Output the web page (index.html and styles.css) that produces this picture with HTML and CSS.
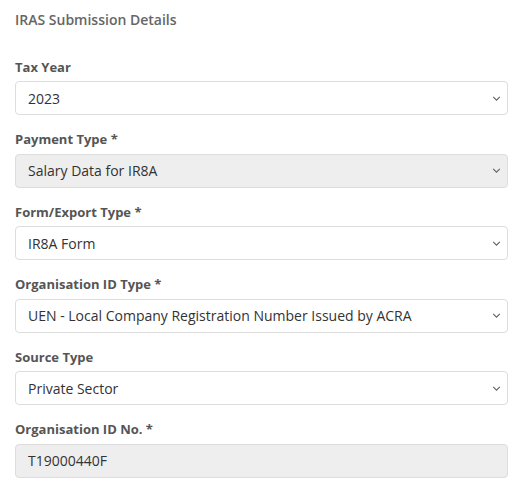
FILE: index.html
```html
<!DOCTYPE html>
<html>
<head>
<meta charset="utf-8">
<link rel="stylesheet" href="styles.css">
</head>
<body>
<div class="panel">
  <h4 class="title">IRAS Submission Details</h4>
  <div class="group">
    <label class="lbl">Tax Year</label>
    <div class="ctrl"><span class="val">2023</span><svg class="chev" viewBox="0 0 10 6" width="9" height="5"><polyline points="1,1 5,5 9,1"/></svg></div>
  </div>
  <div class="group">
    <label class="lbl">Payment Type *</label>
    <div class="ctrl disabled"><span class="val">Salary Data for IR8A</span><svg class="chev" viewBox="0 0 10 6" width="9" height="5"><polyline points="1,1 5,5 9,1"/></svg></div>
  </div>
  <div class="group">
    <label class="lbl">Form/Export Type *</label>
    <div class="ctrl"><span class="val">IR8A Form</span><svg class="chev" viewBox="0 0 10 6" width="9" height="5"><polyline points="1,1 5,5 9,1"/></svg></div>
  </div>
  <div class="group">
    <label class="lbl">Organisation ID Type *</label>
    <div class="ctrl"><span class="val">UEN - Local Company Registration Number Issued by ACRA</span><svg class="chev" viewBox="0 0 10 6" width="9" height="5"><polyline points="1,1 5,5 9,1"/></svg></div>
  </div>
  <div class="group">
    <label class="lbl">Source Type</label>
    <div class="ctrl"><span class="val">Private Sector</span><svg class="chev" viewBox="0 0 10 6" width="9" height="5"><polyline points="1,1 5,5 9,1"/></svg></div>
  </div>
  <div class="group">
    <label class="lbl">Organisation ID No. *</label>
    <div class="ctrl disabled"><span class="val">T19000440F</span></div>
  </div>
</div>
</body>
</html>
```

FILE: styles.css
```css
html, body {
  margin: 0;
  padding: 0;
  background: #fff;
}
body {
  font-family: "Open Sans", "Noto Sans", sans-serif;
  color: #333;
}
.panel {
  width: 493px;
  padding: 0 0 0 15px;
}
.title {
  margin: 0;
  padding-top: 10px;
  height: 47.5px;
  font-size: 14px;
  line-height: 20px;
  font-weight: 600;
  color: #666;
}
.group {
  margin-bottom: 15px;
}
.lbl {
  display: block;
  font-size: 13px;
  line-height: 18.57px;
  font-weight: 700;
  color: #555;
  margin-bottom: 5px;
}
.ctrl {
  box-sizing: border-box;
  height: 34px;
  border: 1px solid #ddd;
  border-radius: 4px;
  background: #fff;
  display: flex;
  align-items: center;
  justify-content: space-between;
  padding: 0 6px 0 12px;
  font-size: 14px;
  color: #333;
}
.ctrl.disabled {
  background: #eee;
}
.val {
  white-space: nowrap;
}
.chev {
  fill: none;
  stroke: #666;
  stroke-width: 1.4;
}
```
